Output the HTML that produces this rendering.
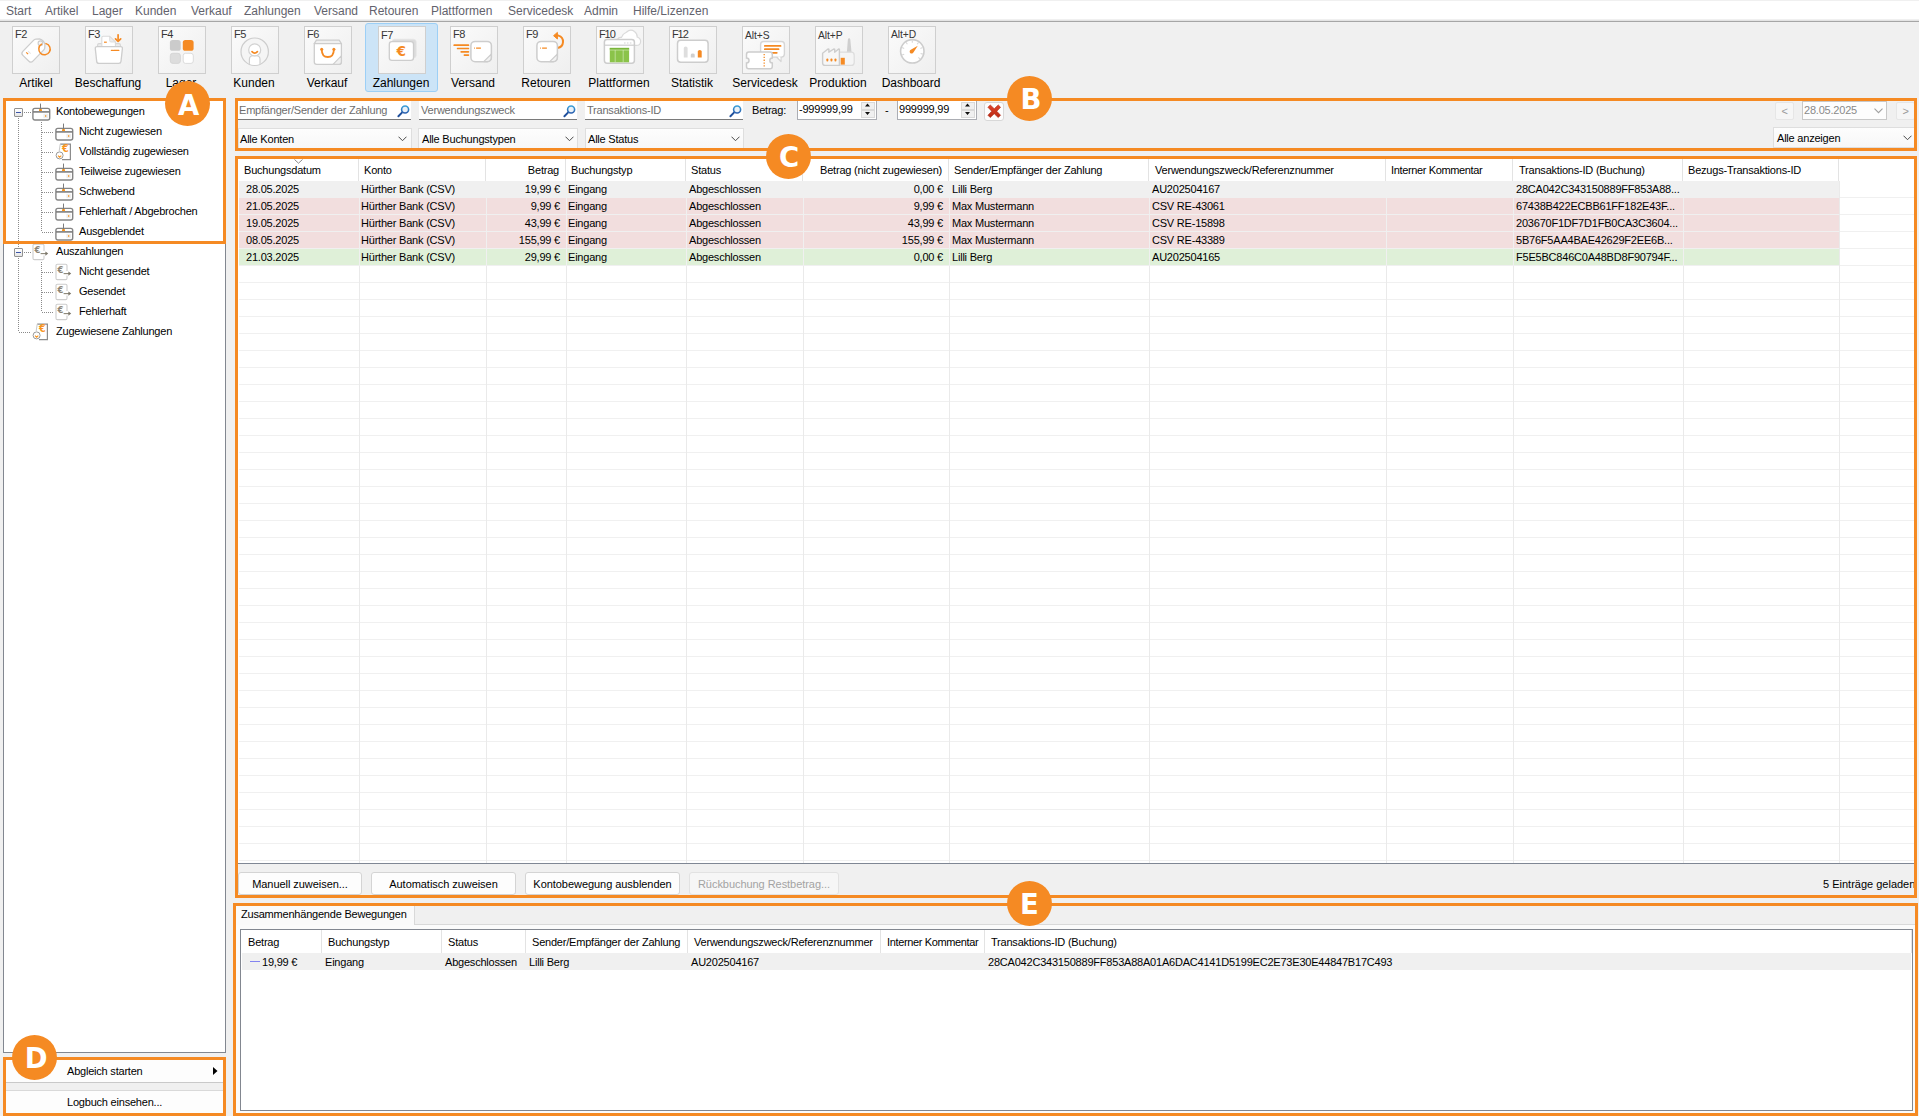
<!DOCTYPE html>
<html lang="de"><head><meta charset="utf-8"><title>Zahlungen</title>
<style>
html,body{margin:0;padding:0}
body{width:1919px;height:1116px;overflow:hidden;background:#f0f0f0;position:relative;font-family:"Liberation Sans",sans-serif;font-size:11px;letter-spacing:-0.21px;color:#000}
div,span{box-sizing:border-box}
.abs,.abs>*{position:absolute}
.t{position:absolute;white-space:pre;line-height:14px;height:14px}
.menu span{position:absolute;top:4px;font-size:12px;letter-spacing:0;color:#62626c;line-height:15px;white-space:pre}
.tb{position:absolute;top:26px;width:48px;height:48px;border:1px solid #cfcfcf;background:linear-gradient(135deg,#fbfbfb,#efefef)}
.tb i{position:absolute;left:2px;top:0px;font-style:normal;font-size:11px;letter-spacing:-0.45px;color:#363636;line-height:14px;white-space:pre}
.tl{position:absolute;top:76px;width:120px;text-align:center;font-size:12px;letter-spacing:0;line-height:15px;color:#000;white-space:pre}
.frame{position:absolute;border:3px solid #f58a23;pointer-events:none}
.circ{position:absolute;width:45px;height:45px;border-radius:50%;background:#f58a23;color:#fff;font-family:"DejaVu Sans","Liberation Sans",sans-serif;font-weight:bold;font-size:27.5px;letter-spacing:0;line-height:45px;text-align:center}
.inp{position:absolute;top:101px;height:19px;background:#fff;border-bottom:1px solid #7a7a7a;color:#6d6d6d}
.inp span{position:absolute;left:1px;top:2px;line-height:14px;white-space:pre}
.cmb{position:absolute;height:21px;background:linear-gradient(#fdfdfd,#f7f7f7);border:1px solid #dedede}
.cmb span{position:absolute;left:2px;top:3px;line-height:14px;white-space:pre}
.btn{position:absolute;top:872px;height:23px;background:#fdfdfd;border:1px solid #d4d4d4;border-radius:3px;text-align:center;line-height:21px;padding-top:1px;letter-spacing:-0.05px;white-space:pre}
.hd{position:absolute;top:0;height:22px;border-right:1px solid #e3e3e3}
.hd span{position:absolute;top:4px;line-height:14px;white-space:pre}
.row{position:absolute;left:0;height:17px}
.row span{position:absolute;top:1px;line-height:14px;white-space:pre}
.vl{position:absolute;width:1px;background:#eaeaea}
.hl{position:absolute;height:1px;background:#f0f0f0}
</style></head><body>
<div class="menu" style="position:absolute;left:0;top:1px;width:1919px;height:18px;background:#fff"></div><div style="position:absolute;left:0;top:20px;width:1919px;height:1px;background:#e4e4e4"></div><div style="position:absolute;left:0;top:21px;width:1919px;height:1px;background:#a6a6a6"></div><div class="menu" style="position:absolute;left:0;top:0;width:1919px;height:20px"><span style="left:6px">Start</span><span style="left:45px">Artikel</span><span style="left:92px">Lager</span><span style="left:135px">Kunden</span><span style="left:191px">Verkauf</span><span style="left:244px">Zahlungen</span><span style="left:314px">Versand</span><span style="left:369px">Retouren</span><span style="left:431px">Plattformen</span><span style="left:508px">Servicedesk</span><span style="left:584px">Admin</span><span style="left:633px">Hilfe/Lizenzen</span></div>
<div style="position:absolute;left:365px;top:23px;width:73px;height:69px;background:#cce4f7;border:1px solid #9ccff6;border-radius:3px"></div><div class="tb" style="left:12px"><i>F2</i><svg style="position:absolute;left:-1px;top:-1px" width="48" height="48" viewBox="0 0 48 48"><g transform="rotate(-46 22.6 23.3)"><path d="M10.1 19.1 Q10.1 16.3 12.9 16.3 H28.6 Q29.8 16.3 30.8 17.1 L33.4 19.4 Q35.6 23.3 33.4 27.2 L30.8 29.5 Q29.8 30.3 28.6 30.3 H12.9 Q10.1 30.3 10.1 27.5 Z" fill="#fff" stroke="#cdcdcd" stroke-width="1.3" stroke-linejoin="round"/><path d="M14.6 19.4 V22" stroke="#f58a23" stroke-width="1.2"/><path d="M16.8 19.8 V23.4" stroke="#e4e4e4" stroke-width="1"/></g><circle cx="28.4" cy="17.2" r="2.3" fill="#f6f6f6" stroke="#cdcdcd" stroke-width="1.1"/><path d="M29.6 18.2 A5.7 5.7 0 1 0 34 17.6" fill="none" stroke="#f58a23" stroke-width="1.5" stroke-linecap="round"/></svg></div><div class="tl" style="left:-24px">Artikel</div><div class="tb" style="left:85px"><i>F3</i><svg style="position:absolute;left:-1px;top:-1px" width="48" height="48" viewBox="0 0 48 48"><path d="M12.6 21 V19 Q12.6 17.6 14 17.6 H34 Q35.4 17.6 35.4 19 V21" fill="#ececec" stroke="#d6d6d6" stroke-width="1.1"/><path d="M16.8 21.5 V11.6 Q16.8 10.2 18.2 10.2 H24.6 L30.4 16 V21.5 Z" fill="#fff" stroke="#dadada" stroke-width="1.1"/><path d="M24.6 10.4 V14.6 Q24.6 16 26 16 H30.2 Z" fill="#ececec" stroke="#dadada" stroke-width="0.8"/><path d="M19 16.2 H21.8" stroke="#f58a23" stroke-width="1.2"/><path d="M10.3 22.6 Q10.1 20.6 12.1 20.6 H35.6 Q37.6 20.6 37.4 22.6 L36 35.4 Q35.8 37.4 33.8 37.4 H13.9 Q11.9 37.4 11.7 35.4 Z" fill="#fff" stroke="#cdcdcd" stroke-width="1.3"/><path d="M26.4 24.4 H27.6 M28.6 24.4 H33.8" stroke="#f58a23" stroke-width="1.3" stroke-linecap="round"/><path d="M33.1 8.8 V13.4" stroke="#f58a23" stroke-width="1.7" stroke-linecap="round"/><path d="M30.5 12.8 L33.1 15.4 L35.7 12.8" fill="none" stroke="#f58a23" stroke-width="1.7" stroke-linecap="round" stroke-linejoin="round"/></svg></div><div class="tl" style="left:48px">Beschaffung</div><div class="tb" style="left:158px"><i>F4</i><svg style="position:absolute;left:-1px;top:-1px" width="48" height="48" viewBox="0 0 48 48"><rect x="11.9" y="14" width="10.8" height="10.8" rx="2.6" fill="#cbcbcb"/><rect x="24.8" y="14" width="10.8" height="10.8" rx="2.6" fill="#f58a23"/><rect x="12.3" y="27.3" width="10.1" height="10.1" rx="2.4" fill="#dddddd" stroke="#d2d2d2" stroke-width="0.8"/><rect x="25.2" y="27.3" width="10.1" height="10.1" rx="2.4" fill="#fff" stroke="#d8d8d8" stroke-width="0.9"/></svg></div><div class="tl" style="left:121px">Lager</div><div class="tb" style="left:231px"><i>F5</i><svg style="position:absolute;left:-1px;top:-1px" width="48" height="48" viewBox="0 0 48 48"><clipPath id="kc"><circle cx="23.7" cy="25.7" r="13.3"/></clipPath><circle cx="23.7" cy="25.7" r="13.7" fill="#f5f5f5" stroke="#cdcdcd" stroke-width="1.2"/><g clip-path="url(#kc)"><rect x="18.4" y="29.6" width="10.6" height="14" rx="3.6" fill="#fff" stroke="#d0d0d0" stroke-width="1.2"/></g><circle cx="23.7" cy="23.9" r="6" fill="#fff" stroke="#d2d2d2" stroke-width="1.2"/><path d="M21 25.6 Q23.7 28.6 26.4 25.6" fill="none" stroke="#f58a23" stroke-width="1.7" stroke-linecap="round"/></svg></div><div class="tl" style="left:194px">Kunden</div><div class="tb" style="left:304px"><i>F6</i><svg style="position:absolute;left:-1px;top:-1px" width="48" height="48" viewBox="0 0 48 48"><path d="M10.3 17.6 L12.4 14.1 H35.2 L37.4 17.6 Z" fill="#f0f0f0" stroke="#cdcdcd" stroke-width="1.2" stroke-linejoin="round"/><path d="M10.3 17.6 H37.4 V36 Q37.4 38.4 35 38.4 H12.7 Q10.3 38.4 10.3 36 Z" fill="#fff" stroke="#cdcdcd" stroke-width="1.3"/><path d="M29 38.3 L37.3 29.8 V36 Q37.3 38.3 35 38.3 Z" fill="#f0f0f0" stroke="#cdcdcd" stroke-width="1.1" stroke-linejoin="round"/><path d="M17.7 23.4 Q17.9 31 23.8 31 Q29.7 31 29.9 23.4" fill="none" stroke="#f58a23" stroke-width="1.8"/><circle cx="17.7" cy="23.2" r="1.5" fill="#f58a23"/><circle cx="29.9" cy="23.2" r="1.5" fill="#f58a23"/></svg></div><div class="tl" style="left:267px">Verkauf</div><div class="tb" style="left:378px"><i style="top:1px">F7</i><svg style="position:absolute;left:-1px;top:-1px" width="48" height="48" viewBox="0 0 48 48"><rect x="14" y="13.2" width="24.2" height="18.8" rx="2.8" fill="#dcdcdc" stroke="#e6e6e6" stroke-width="0.8"/><rect x="11.3" y="15.6" width="24.2" height="18.8" rx="2.6" fill="#fff" stroke="#cdcdcd" stroke-width="1.3"/><text x="23.2" y="30.2" text-anchor="middle" font-family="DejaVu Sans, Liberation Sans, sans-serif" font-weight="bold" font-size="13.6" fill="#f58a23">€</text></svg></div><div class="tl" style="left:341px">Zahlungen</div><div class="tb" style="left:450px"><i>F8</i><svg style="position:absolute;left:-1px;top:-1px" width="48" height="48" viewBox="0 0 48 48"><rect x="20.9" y="15.4" width="20.5" height="20.4" rx="4.2" fill="#fff" stroke="#cdcdcd" stroke-width="1.5"/><path d="M33.7 35.6 L41.2 28.2 V31.6 Q41.2 35.6 37.2 35.6 Z" fill="#f2f2f2" stroke="#cdcdcd" stroke-width="1.2" stroke-linejoin="round"/><path d="M24.0 22.1 H24.799999999999997 M26.099999999999998 22.1 H30.9" stroke="#f58a23" stroke-width="1.3"/><path d="M4.2 19.2 H18.4 M7.6 22.5 H18.4 M11.2 25.8 H18.4 M14.4 29.1 H18.4" stroke="#f58a23" stroke-width="1.7" stroke-linecap="round"/></svg></div><div class="tl" style="left:413px">Versand</div><div class="tb" style="left:523px"><i>F9</i><svg style="position:absolute;left:-1px;top:-1px" width="48" height="48" viewBox="0 0 48 48"><path d="M34.6 21.9 A6.3 6.3 0 0 0 35.4 9.6 L33 9.6" fill="none" stroke="#f58a23" stroke-width="2"/><path d="M34.4 6.4 L30.6 9.7 L34.4 13 Z" fill="#f58a23" stroke="#f58a23" stroke-width="1" stroke-linejoin="round"/><rect x="13.9" y="15.4" width="20.5" height="20.4" rx="4.2" fill="#fff" stroke="#cdcdcd" stroke-width="1.5"/><path d="M26.700000000000003 35.6 L34.2 28.2 V31.6 Q34.2 35.6 30.200000000000003 35.6 Z" fill="#f2f2f2" stroke="#cdcdcd" stroke-width="1.2" stroke-linejoin="round"/><path d="M17.0 22.1 H17.8 M19.1 22.1 H23.9" stroke="#f58a23" stroke-width="1.3"/></svg></div><div class="tl" style="left:486px">Retouren</div><div class="tb" style="left:596px"><i style="letter-spacing:-1.1px">F10</i><svg style="position:absolute;left:-1px;top:-1px" width="48" height="48" viewBox="0 0 48 48"><path d="M22.4 19.4 Q19.6 17 21.4 13.4 Q22.4 11.2 25.4 11.4 Q27 7.6 30.4 6.2 Q34.4 2.6 38.4 5.4 Q41.4 7.4 41.2 11 Q45 12.4 44.6 16 Q44.2 19.4 40.4 19.4 Z" fill="#fff" stroke="#dadada" stroke-width="1.2"/><rect x="8.4" y="13.4" width="30" height="23.8" rx="2.6" fill="#fff" stroke="#cdcdcd" stroke-width="1.5"/><path d="M8.4 19.2 H38.4" stroke="#cdcdcd" stroke-width="1.2"/><path d="M28 16.9 H29.6 M30.9 16.9 H32.5 M33.8 16.9 H35.4" stroke="#e2e2e2" stroke-width="1.5"/><rect x="13.8" y="21.9" width="19.3" height="14.4" fill="#8bc34a"/><rect x="13.8" y="21.9" width="19.3" height="1.8" fill="#79b63a"/><path d="M13.8 24 H33.1 M19.2 24 V36.3 M27.2 24 V36.3" stroke="#dff0c8" stroke-width="0.6"/></svg></div><div class="tl" style="left:559px">Plattformen</div><div class="tb" style="left:669px"><i style="letter-spacing:-1.1px">F12</i><svg style="position:absolute;left:-1px;top:-1px" width="48" height="48" viewBox="0 0 48 48"><rect x="8.5" y="14.3" width="30.6" height="22" rx="3.2" fill="#fff" stroke="#cdcdcd" stroke-width="1.5"/><path d="M14.8 31.6 V22 Q14.8 20.5 16.7 20.5 Q18.6 20.5 18.6 22 V31.6 Z" fill="#dedede"/><path d="M21.8 31.6 V28.8 Q21.8 27.5 23.75 27.5 Q25.7 27.5 25.7 28.8 V31.6 Z" fill="#cfcfcf"/><path d="M28.8 31.6 V25.6 Q28.8 23.9 30.75 23.9 Q32.7 23.9 32.7 25.6 V31.6 Z" fill="#f58a23"/></svg></div><div class="tl" style="left:632px">Statistik</div><div class="tb" style="left:742px"><i style="top:2px;font-size:10.3px;letter-spacing:-0.1px">Alt+S</i><svg style="position:absolute;left:-1px;top:-1px" width="48" height="48" viewBox="0 0 48 48"><path d="M34.6 31 L39 35.6 V31" fill="#fff" stroke="#d6d6d6" stroke-width="1.3" stroke-linejoin="round"/><rect x="18.6" y="15.5" width="23.8" height="15.6" rx="3" fill="#fff" stroke="#d6d6d6" stroke-width="1.4"/><path d="M35.4 30.4 L38.3 33.6 V30.4 Z" fill="#fff"/><path d="M22.8 19.9 H38.6 M22.8 23.2 H36.6 M30 26.8 H34.8" stroke="#f58a23" stroke-width="1.7" stroke-linecap="round"/><path d="M6.8 26.1 H28 Q30.3 26.1 30.3 28.4 V32 A2.5 2.5 0 0 0 30.3 37 V40.5 Q30.3 42.8 28 42.8 H6.8 Q4.5 42.8 4.5 40.5 V37 A2.5 2.5 0 0 0 4.5 32 V28.4 Q4.5 26.1 6.8 26.1 Z" fill="#fff" stroke="#cdcdcd" stroke-width="1.5"/><path d="M22.2 28 V41.4" stroke="#f58a23" stroke-width="1.3" stroke-dasharray="1.3 1.5"/></svg></div><div class="tl" style="left:705px">Servicedesk</div><div class="tb" style="left:815px"><i style="top:2px;font-size:10.3px;letter-spacing:-0.1px">Alt+P</i><svg style="position:absolute;left:-1px;top:-1px" width="48" height="48" viewBox="0 0 48 48"><path d="M31.8 27 L32.9 13.4 Q33 12.2 34.1 12.2 Q35.2 12.2 35.3 13.4 L36.6 27 Z" fill="#cfcfcf"/><rect x="22" y="26.2" width="17.2" height="13.2" rx="3" fill="#f5f5f5" stroke="#dddddd" stroke-width="1.2"/><path d="M7.6 27.2 L13 23 L13.9 23.2 V26.2 L18.8 23 L19.7 23.2 V26.2 L23.6 23 L24.4 23.2 V39.4 H10 Q7.6 39.4 7.6 37 Z" fill="#f7f7f7" stroke="#cdcdcd" stroke-width="1.4" stroke-linejoin="round"/><rect x="11.4" y="32.4" width="1.9" height="3.2" rx="0.8" fill="#f58a23"/><rect x="15.5" y="32.4" width="1.9" height="3.2" rx="0.8" fill="#f58a23"/><rect x="19.5" y="32.4" width="1.9" height="3.2" rx="0.8" fill="#f58a23"/><rect x="25.7" y="31.8" width="4.1" height="6.8" fill="#f58a23"/></svg></div><div class="tl" style="left:778px">Produktion</div><div class="tb" style="left:888px"><i style="top:1px;font-size:10.3px;letter-spacing:-0.1px">Alt+D</i><svg style="position:absolute;left:-1px;top:-1px" width="48" height="48" viewBox="0 0 48 48"><circle cx="24.3" cy="25.3" r="11.7" fill="#fff" stroke="#cdcdcd" stroke-width="1.6"/><path d="M16.2 28.2 L14.0 29.1 M16.2 22.4 L14.0 21.5 M19.4 18.3 L18.0 16.3 M24.3 16.7 L24.3 14.3 M29.2 18.3 L30.6 16.3 M32.4 22.4 L34.6 21.5 M32.6 27.5 L34.9 28.1 M30.4 31.4 L32.1 33.1 " stroke="#d8d8d8" stroke-width="1.1"/><path d="M29.8 19.8 L25.4 26.6 A2 2 0 1 1 22.8 23.8 Z" fill="#f58a23"/></svg></div><div class="tl" style="left:851px">Dashboard</div>
<div style="position:absolute;left:3px;top:100px;width:223px;height:953px;background:#fff;border:1px solid #828790"></div><div style="position:absolute;left:18px;top:118px;width:1px;height:214px;background:repeating-linear-gradient(to bottom,#8a8a8a 0 1px,transparent 1px 2px)"></div>
<div style="position:absolute;left:41px;top:122px;width:1px;height:110px;background:repeating-linear-gradient(to bottom,#8a8a8a 0 1px,transparent 1px 2px)"></div>
<div style="position:absolute;left:41px;top:262px;width:1px;height:50px;background:repeating-linear-gradient(to bottom,#8a8a8a 0 1px,transparent 1px 2px)"></div>
<div style="position:absolute;left:24px;top:112px;width:7px;height:1px;background:repeating-linear-gradient(to right,#8a8a8a 0 1px,transparent 1px 2px)"></div>
<div style="position:absolute;left:24px;top:252px;width:7px;height:1px;background:repeating-linear-gradient(to right,#8a8a8a 0 1px,transparent 1px 2px)"></div>
<div style="position:absolute;left:19px;top:332px;width:12px;height:1px;background:repeating-linear-gradient(to right,#8a8a8a 0 1px,transparent 1px 2px)"></div>
<div style="position:absolute;left:42px;top:132px;width:12px;height:1px;background:repeating-linear-gradient(to right,#8a8a8a 0 1px,transparent 1px 2px)"></div>
<div style="position:absolute;left:42px;top:152px;width:12px;height:1px;background:repeating-linear-gradient(to right,#8a8a8a 0 1px,transparent 1px 2px)"></div>
<div style="position:absolute;left:42px;top:172px;width:12px;height:1px;background:repeating-linear-gradient(to right,#8a8a8a 0 1px,transparent 1px 2px)"></div>
<div style="position:absolute;left:42px;top:192px;width:12px;height:1px;background:repeating-linear-gradient(to right,#8a8a8a 0 1px,transparent 1px 2px)"></div>
<div style="position:absolute;left:42px;top:212px;width:12px;height:1px;background:repeating-linear-gradient(to right,#8a8a8a 0 1px,transparent 1px 2px)"></div>
<div style="position:absolute;left:42px;top:232px;width:12px;height:1px;background:repeating-linear-gradient(to right,#8a8a8a 0 1px,transparent 1px 2px)"></div>
<div style="position:absolute;left:42px;top:272px;width:12px;height:1px;background:repeating-linear-gradient(to right,#8a8a8a 0 1px,transparent 1px 2px)"></div>
<div style="position:absolute;left:42px;top:292px;width:12px;height:1px;background:repeating-linear-gradient(to right,#8a8a8a 0 1px,transparent 1px 2px)"></div>
<div style="position:absolute;left:42px;top:312px;width:12px;height:1px;background:repeating-linear-gradient(to right,#8a8a8a 0 1px,transparent 1px 2px)"></div>
<div style="position:absolute;left:14px;top:108px;width:9px;height:9px;border:1px solid #919191;border-radius:1px;background:linear-gradient(#fff,#e4e4e4)"><i style="position:absolute;left:1px;top:3px;width:5px;height:1px;background:#3c55a8"></i></div>
<div style="position:absolute;left:14px;top:248px;width:9px;height:9px;border:1px solid #919191;border-radius:1px;background:linear-gradient(#fff,#e4e4e4)"><i style="position:absolute;left:1px;top:3px;width:5px;height:1px;background:#3c55a8"></i></div>
<svg style="position:absolute;left:32px;top:103px" width="19" height="18" viewBox="0 0 19 18"><rect x="0.9" y="5.4" width="16.8" height="11.6" rx="2" fill="#fff" stroke="#858585" stroke-width="1.4"/><path d="M8.5 0.6 V7.6" stroke="#7d7d7d" stroke-width="1"/><path d="M1 8.9 H17.6" stroke="#7d7d7d" stroke-width="1.6"/><rect x="7" y="6.2" width="3" height="1.8" fill="#f7941d"/><rect x="11.4" y="10.8" width="4.8" height="4.4" fill="#ededed"/><path d="M13 11.9 L14.9 13 L13 14.1 Z" fill="#f7941d"/></svg>
<div class="t" style="left:56px;top:104px">Kontobewegungen</div>
<svg style="position:absolute;left:55px;top:123px" width="19" height="18" viewBox="0 0 19 18"><rect x="0.9" y="5.4" width="16.8" height="11.6" rx="2" fill="#fff" stroke="#858585" stroke-width="1.4"/><path d="M8.5 0.6 V7.6" stroke="#7d7d7d" stroke-width="1"/><path d="M1 8.9 H17.6" stroke="#7d7d7d" stroke-width="1.6"/><rect x="7" y="6.2" width="3" height="1.8" fill="#f7941d"/><rect x="11.4" y="10.8" width="4.8" height="4.4" fill="#ededed"/><path d="M13 11.9 L14.9 13 L13 14.1 Z" fill="#f7941d"/></svg>
<div class="t" style="left:79px;top:124px">Nicht zugewiesen</div>
<svg style="position:absolute;left:55px;top:143px" width="18" height="18" viewBox="0 0 18 18"><path d="M5.2 1.2 H15.4 V16.6 H7" fill="#fff" stroke="#8c8c8c" stroke-width="1.2"/><path d="M5.2 1.2 L4.2 8" stroke="#c9c9c9" stroke-width="1" fill="none"/><circle cx="4.6" cy="12.4" r="3.5" fill="#fff" stroke="#9a9a9a" stroke-width="1"/><path d="M3 12.6 L4.6 14.2 L6.3 12.6" fill="none" stroke="#f7941d" stroke-width="1.1"/><text x="6.9" y="9.4" font-family="DejaVu Sans, Liberation Sans, sans-serif" font-weight="bold" font-size="9.6" fill="#f7941d">€</text></svg>
<div class="t" style="left:79px;top:144px">Vollständig zugewiesen</div>
<svg style="position:absolute;left:55px;top:163px" width="19" height="18" viewBox="0 0 19 18"><rect x="0.9" y="5.4" width="16.8" height="11.6" rx="2" fill="#fff" stroke="#858585" stroke-width="1.4"/><path d="M8.5 0.6 V7.6" stroke="#7d7d7d" stroke-width="1"/><path d="M1 8.9 H17.6" stroke="#7d7d7d" stroke-width="1.6"/><rect x="7" y="6.2" width="3" height="1.8" fill="#f7941d"/><rect x="11.4" y="10.8" width="4.8" height="4.4" fill="#ededed"/><path d="M13 11.9 L14.9 13 L13 14.1 Z" fill="#f7941d"/></svg>
<div class="t" style="left:79px;top:164px">Teilweise zugewiesen</div>
<svg style="position:absolute;left:55px;top:183px" width="19" height="18" viewBox="0 0 19 18"><rect x="0.9" y="5.4" width="16.8" height="11.6" rx="2" fill="#fff" stroke="#858585" stroke-width="1.4"/><path d="M8.5 0.6 V7.6" stroke="#7d7d7d" stroke-width="1"/><path d="M1 8.9 H17.6" stroke="#7d7d7d" stroke-width="1.6"/><rect x="7" y="6.2" width="3" height="1.8" fill="#f7941d"/><rect x="11.4" y="10.8" width="4.8" height="4.4" fill="#ededed"/><path d="M13 11.9 L14.9 13 L13 14.1 Z" fill="#f7941d"/></svg>
<div class="t" style="left:79px;top:184px">Schwebend</div>
<svg style="position:absolute;left:55px;top:203px" width="19" height="18" viewBox="0 0 19 18"><rect x="0.9" y="5.4" width="16.8" height="11.6" rx="2" fill="#fff" stroke="#858585" stroke-width="1.4"/><path d="M8.5 0.6 V7.6" stroke="#7d7d7d" stroke-width="1"/><path d="M1 8.9 H17.6" stroke="#7d7d7d" stroke-width="1.6"/><rect x="7" y="6.2" width="3" height="1.8" fill="#f7941d"/><rect x="11.4" y="10.8" width="4.8" height="4.4" fill="#ededed"/><path d="M13 11.9 L14.9 13 L13 14.1 Z" fill="#f7941d"/></svg>
<div class="t" style="left:79px;top:204px">Fehlerhaft / Abgebrochen</div>
<svg style="position:absolute;left:55px;top:223px" width="19" height="18" viewBox="0 0 19 18"><rect x="0.9" y="5.4" width="16.8" height="11.6" rx="2" fill="#fff" stroke="#858585" stroke-width="1.4"/><path d="M8.5 0.6 V7.6" stroke="#7d7d7d" stroke-width="1"/><path d="M1 8.9 H17.6" stroke="#7d7d7d" stroke-width="1.6"/><rect x="7" y="6.2" width="3" height="1.8" fill="#f7941d"/><rect x="11.4" y="10.8" width="4.8" height="4.4" fill="#ededed"/><path d="M13 11.9 L14.9 13 L13 14.1 Z" fill="#f7941d"/></svg>
<div class="t" style="left:79px;top:224px">Ausgeblendet</div>
<svg style="position:absolute;left:32px;top:243px" width="18" height="18" viewBox="0 0 18 18"><path d="M12 12.5 V15.2 Q12 16.6 10.6 16.6 H2.4 Q1 16.6 1 15.2 V2.6 Q1 1.2 2.4 1.2 H10.6 Q12 1.2 12 2.6 V8" fill="#fff" stroke="#cdcdcd" stroke-width="1.1"/><text x="2.6" y="9.6" font-family="DejaVu Sans, Liberation Sans, sans-serif" font-weight="bold" font-size="8.6" fill="#8c8577">€</text><path d="M8.6 10.6 H14" stroke="#8a8577" stroke-width="1.1"/><path d="M13.4 8.4 L16.2 10.6 L13.4 12.8 Z" fill="#7b766a"/></svg>
<div class="t" style="left:56px;top:244px">Auszahlungen</div>
<svg style="position:absolute;left:55px;top:263px" width="18" height="18" viewBox="0 0 18 18"><path d="M12 12.5 V15.2 Q12 16.6 10.6 16.6 H2.4 Q1 16.6 1 15.2 V2.6 Q1 1.2 2.4 1.2 H10.6 Q12 1.2 12 2.6 V8" fill="#fff" stroke="#cdcdcd" stroke-width="1.1"/><text x="2.6" y="9.6" font-family="DejaVu Sans, Liberation Sans, sans-serif" font-weight="bold" font-size="8.6" fill="#8c8577">€</text><path d="M8.6 10.6 H14" stroke="#8a8577" stroke-width="1.1"/><path d="M13.4 8.4 L16.2 10.6 L13.4 12.8 Z" fill="#7b766a"/></svg>
<div class="t" style="left:79px;top:264px">Nicht gesendet</div>
<svg style="position:absolute;left:55px;top:283px" width="18" height="18" viewBox="0 0 18 18"><path d="M12 12.5 V15.2 Q12 16.6 10.6 16.6 H2.4 Q1 16.6 1 15.2 V2.6 Q1 1.2 2.4 1.2 H10.6 Q12 1.2 12 2.6 V8" fill="#fff" stroke="#cdcdcd" stroke-width="1.1"/><text x="2.6" y="9.6" font-family="DejaVu Sans, Liberation Sans, sans-serif" font-weight="bold" font-size="8.6" fill="#8c8577">€</text><path d="M8.6 10.6 H14" stroke="#8a8577" stroke-width="1.1"/><path d="M13.4 8.4 L16.2 10.6 L13.4 12.8 Z" fill="#7b766a"/></svg>
<div class="t" style="left:79px;top:284px">Gesendet</div>
<svg style="position:absolute;left:55px;top:303px" width="18" height="18" viewBox="0 0 18 18"><path d="M12 12.5 V15.2 Q12 16.6 10.6 16.6 H2.4 Q1 16.6 1 15.2 V2.6 Q1 1.2 2.4 1.2 H10.6 Q12 1.2 12 2.6 V8" fill="#fff" stroke="#cdcdcd" stroke-width="1.1"/><text x="2.6" y="9.6" font-family="DejaVu Sans, Liberation Sans, sans-serif" font-weight="bold" font-size="8.6" fill="#8c8577">€</text><path d="M8.6 10.6 H14" stroke="#8a8577" stroke-width="1.1"/><path d="M13.4 8.4 L16.2 10.6 L13.4 12.8 Z" fill="#7b766a"/></svg>
<div class="t" style="left:79px;top:304px">Fehlerhaft</div>
<svg style="position:absolute;left:32px;top:323px" width="18" height="18" viewBox="0 0 18 18"><path d="M5.2 1.2 H15.4 V16.6 H7" fill="#fff" stroke="#8c8c8c" stroke-width="1.2"/><path d="M5.2 1.2 L4.2 8" stroke="#c9c9c9" stroke-width="1" fill="none"/><circle cx="4.6" cy="12.4" r="3.5" fill="#fff" stroke="#9a9a9a" stroke-width="1"/><path d="M3 12.6 L4.6 14.2 L6.3 12.6" fill="none" stroke="#f7941d" stroke-width="1.1"/><text x="6.9" y="9.4" font-family="DejaVu Sans, Liberation Sans, sans-serif" font-weight="bold" font-size="9.6" fill="#f7941d">€</text></svg>
<div class="t" style="left:56px;top:324px">Zugewiesene Zahlungen</div><div class="inp" style="left:238px;width:173px"><span style="left:1px">Empfänger/Sender der Zahlung</span><svg style="position:absolute;right:0px;top:2px" width="16" height="16" viewBox="0 0 16 16"><defs><linearGradient id="mg1" x1="0" y1="0" x2="0" y2="1"><stop offset="0" stop-color="#3aa0d8"/><stop offset="1" stop-color="#2a5fae"/></linearGradient></defs><path d="M7.2 9.4 L3.4 13.2" stroke="#1f4f9c" stroke-width="2" stroke-linecap="round"/><circle cx="10.1" cy="6.5" r="3.5" fill="#eaf1f8" stroke="url(#mg1)" stroke-width="1.6"/></svg></div><div class="inp" style="left:419px;width:158px"><span style="left:2px">Verwendungszweck</span><svg style="position:absolute;right:0px;top:2px" width="16" height="16" viewBox="0 0 16 16"><defs><linearGradient id="mg2" x1="0" y1="0" x2="0" y2="1"><stop offset="0" stop-color="#3aa0d8"/><stop offset="1" stop-color="#2a5fae"/></linearGradient></defs><path d="M7.2 9.4 L3.4 13.2" stroke="#1f4f9c" stroke-width="2" stroke-linecap="round"/><circle cx="10.1" cy="6.5" r="3.5" fill="#eaf1f8" stroke="url(#mg2)" stroke-width="1.6"/></svg></div><div class="inp" style="left:585px;width:158px"><span style="left:2px">Transaktions-ID</span><svg style="position:absolute;right:0px;top:2px" width="16" height="16" viewBox="0 0 16 16"><defs><linearGradient id="mg3" x1="0" y1="0" x2="0" y2="1"><stop offset="0" stop-color="#3aa0d8"/><stop offset="1" stop-color="#2a5fae"/></linearGradient></defs><path d="M7.2 9.4 L3.4 13.2" stroke="#1f4f9c" stroke-width="2" stroke-linecap="round"/><circle cx="10.1" cy="6.5" r="3.5" fill="#eaf1f8" stroke="url(#mg3)" stroke-width="1.6"/></svg></div><div class="cmb" style="left:238px;top:128px;width:174px;color:#000"><span style="left:1px">Alle Konten</span><svg style="position:absolute;right:4px;top:7px" width="9" height="6" viewBox="0 0 9 6"><path d="M0.5 0.7 L4.5 4.7 L8.5 0.7" fill="none" stroke="#4a4a4a" stroke-width="1"/></svg></div><div class="cmb" style="left:418px;top:128px;width:160px;color:#000"><span style="left:3px">Alle Buchungstypen</span><svg style="position:absolute;right:3px;top:7px" width="9" height="6" viewBox="0 0 9 6"><path d="M0.5 0.7 L4.5 4.7 L8.5 0.7" fill="none" stroke="#4a4a4a" stroke-width="1"/></svg></div><div class="cmb" style="left:585px;top:128px;width:159px;color:#000"><span style="left:2px">Alle Status</span><svg style="position:absolute;right:3px;top:7px" width="9" height="6" viewBox="0 0 9 6"><path d="M0.5 0.7 L4.5 4.7 L8.5 0.7" fill="none" stroke="#4a4a4a" stroke-width="1"/></svg></div><div class="cmb" style="left:1773px;top:127px;width:143px;color:#000"><span style="left:3px">Alle anzeigen</span><svg style="position:absolute;right:3px;top:7px" width="9" height="6" viewBox="0 0 9 6"><path d="M0.5 0.7 L4.5 4.7 L8.5 0.7" fill="none" stroke="#4a4a4a" stroke-width="1"/></svg></div><div class="t" style="left:752px;top:103px">Betrag:</div><div style="position:absolute;left:797px;top:100px;width:80px;height:20px;background:#fff;border:1px solid #abadb3"><span class="t" style="left:1px;top:1px">-999999,99</span><div style="position:absolute;right:1px;top:1px;width:14px;height:8px;background:#f0f0f0;border:1px solid #dadada"></div><div style="position:absolute;right:1px;top:9px;width:14px;height:8px;background:#f0f0f0;border:1px solid #dadada"></div><svg style="position:absolute;right:6px;top:2px" width="5" height="13" viewBox="0 0 5 13"><path d="M0 3.6 L2.5 0.6 L5 3.6 Z M0 9 L2.5 12 L5 9 Z" fill="#111"/></svg></div><div class="t" style="left:885px;top:103px">-</div><div style="position:absolute;left:897px;top:100px;width:80px;height:20px;background:#fff;border:1px solid #abadb3"><span class="t" style="left:1px;top:1px">999999,99</span><div style="position:absolute;right:1px;top:1px;width:14px;height:8px;background:#f0f0f0;border:1px solid #dadada"></div><div style="position:absolute;right:1px;top:9px;width:14px;height:8px;background:#f0f0f0;border:1px solid #dadada"></div><svg style="position:absolute;right:6px;top:2px" width="5" height="13" viewBox="0 0 5 13"><path d="M0 3.6 L2.5 0.6 L5 3.6 Z M0 9 L2.5 12 L5 9 Z" fill="#111"/></svg></div><div style="position:absolute;left:984px;top:102px;width:20px;height:19px;background:#fdfdfd;border:1px solid #d8d8d8;border-radius:3px"><svg style="position:absolute;left:2px;top:1px" width="14.5" height="14.5" viewBox="0 0 16 16"><defs><linearGradient id="rx" x1="0" y1="0" x2="0" y2="1"><stop offset="0" stop-color="#e0442a"/><stop offset="1" stop-color="#b92a14"/></linearGradient></defs><path d="M3.6 1 L8 5.2 L12.4 1 L15 3.6 L10.8 8 L15 12.4 L12.4 15 L8 10.8 L3.6 15 L1 12.4 L5.2 8 L1 3.6 Z" fill="url(#rx)" stroke="#a8220f" stroke-width="0.6" stroke-linejoin="round"/></svg></div><div style="position:absolute;left:1775px;top:102px;width:19px;height:18px;background:#f6f6f6;border:1px solid #e6e6e6;border-radius:2px;color:#9a9a9a;text-align:center;line-height:16px">&lt;</div><div style="position:absolute;left:1802px;top:101px;width:85px;height:19px;background:#fdfdfd;border:1px solid #c8c8c8;color:#8a8a8a"><span class="t" style="left:1px;top:1px">28.05.2025</span><svg style="position:absolute;right:3px;top:6px" width="9" height="6" viewBox="0 0 9 6"><path d="M0.5 0.7 L4.5 4.7 L8.5 0.7" fill="none" stroke="#a0a0a0" stroke-width="1.1"/></svg></div><div style="position:absolute;left:1896px;top:102px;width:19px;height:18px;background:#f6f6f6;border:1px solid #e6e6e6;border-radius:2px;color:#9a9a9a;text-align:center;line-height:16px">&gt;</div>
<div style="position:absolute;left:238px;top:159px;width:1676px;height:704px;background:#fff;overflow:hidden"><div class="hl" style="left:1px;top:38px;width:1675px"></div><div class="hl" style="left:1px;top:55px;width:1675px"></div><div class="hl" style="left:1px;top:72px;width:1675px"></div><div class="hl" style="left:1px;top:89px;width:1675px"></div><div class="hl" style="left:1px;top:106px;width:1675px"></div><div class="hl" style="left:1px;top:123px;width:1675px"></div><div class="hl" style="left:1px;top:140px;width:1675px"></div><div class="hl" style="left:1px;top:157px;width:1675px"></div><div class="hl" style="left:1px;top:174px;width:1675px"></div><div class="hl" style="left:1px;top:191px;width:1675px"></div><div class="hl" style="left:1px;top:208px;width:1675px"></div><div class="hl" style="left:1px;top:225px;width:1675px"></div><div class="hl" style="left:1px;top:242px;width:1675px"></div><div class="hl" style="left:1px;top:259px;width:1675px"></div><div class="hl" style="left:1px;top:276px;width:1675px"></div><div class="hl" style="left:1px;top:293px;width:1675px"></div><div class="hl" style="left:1px;top:310px;width:1675px"></div><div class="hl" style="left:1px;top:327px;width:1675px"></div><div class="hl" style="left:1px;top:344px;width:1675px"></div><div class="hl" style="left:1px;top:361px;width:1675px"></div><div class="hl" style="left:1px;top:378px;width:1675px"></div><div class="hl" style="left:1px;top:395px;width:1675px"></div><div class="hl" style="left:1px;top:412px;width:1675px"></div><div class="hl" style="left:1px;top:429px;width:1675px"></div><div class="hl" style="left:1px;top:446px;width:1675px"></div><div class="hl" style="left:1px;top:463px;width:1675px"></div><div class="hl" style="left:1px;top:480px;width:1675px"></div><div class="hl" style="left:1px;top:497px;width:1675px"></div><div class="hl" style="left:1px;top:514px;width:1675px"></div><div class="hl" style="left:1px;top:531px;width:1675px"></div><div class="hl" style="left:1px;top:548px;width:1675px"></div><div class="hl" style="left:1px;top:565px;width:1675px"></div><div class="hl" style="left:1px;top:582px;width:1675px"></div><div class="hl" style="left:1px;top:599px;width:1675px"></div><div class="hl" style="left:1px;top:616px;width:1675px"></div><div class="hl" style="left:1px;top:633px;width:1675px"></div><div class="hl" style="left:1px;top:650px;width:1675px"></div><div class="hl" style="left:1px;top:667px;width:1675px"></div><div class="hl" style="left:1px;top:684px;width:1675px"></div><div class="hl" style="left:1px;top:701px;width:1675px"></div><div class="hl" style="left:1px;top:718px;width:1675px"></div><div class="vl" style="left:121px;top:22px;height:690px"></div><div class="vl" style="left:248px;top:22px;height:690px"></div><div class="vl" style="left:328px;top:22px;height:690px"></div><div class="vl" style="left:448px;top:22px;height:690px"></div><div class="vl" style="left:565px;top:22px;height:690px"></div><div class="vl" style="left:711px;top:22px;height:690px"></div><div class="vl" style="left:911px;top:22px;height:690px"></div><div class="vl" style="left:1148px;top:22px;height:690px"></div><div class="vl" style="left:1275px;top:22px;height:690px"></div><div class="vl" style="left:1445px;top:22px;height:690px"></div><div class="vl" style="left:1601px;top:22px;height:690px"></div><div class="hd" style="left:0px;width:121px"><span style="left:6px">Buchungsdatum</span></div><div class="hd" style="left:120px;width:128px"><span style="left:6px">Konto</span></div><div class="hd" style="left:247px;width:81px"><span style="right:6px">Betrag</span></div><div class="hd" style="left:327px;width:121px"><span style="left:6px">Buchungstyp</span></div><div class="hd" style="left:447px;width:118px"><span style="left:6px">Status</span></div><div class="hd" style="left:564px;width:147px"><span style="right:6px">Betrag (nicht zugewiesen)</span></div><div class="hd" style="left:710px;width:201px"><span style="left:6px">Sender/Empfänger der Zahlung</span></div><div class="hd" style="left:910px;width:238px"><span style="left:7px">Verwendungszweck/Referenznummer</span></div><div class="hd" style="left:1147px;width:128px"><span style="left:6px;letter-spacing:-0.36px">Interner Kommentar</span></div><div class="hd" style="left:1274px;width:171px"><span style="left:7px">Transaktions-ID (Buchung)</span></div><div class="hd" style="left:1444px;width:157px"><span style="left:6px">Bezugs-Transaktions-ID</span></div><svg style="position:absolute;left:56px;top:0px" width="9" height="5" viewBox="0 0 9 5"><path d="M0.5 0.5 L4.5 4.2 L8.5 0.5" fill="none" stroke="#8a8a8a" stroke-width="1"/></svg><div class="row" style="top:22px;left:1px;width:1600px;background:#f0f0f0;border-bottom:1px solid #f0f0f0"><span style="left:7px">28.05.2025</span><span style="left:122px">Hürther Bank (CSV)</span><span style="right:1279px">19,99 €</span><span style="left:329px">Eingang</span><span style="left:450px">Abgeschlossen</span><span style="right:896px">0,00 €</span><span style="left:713px">Lilli Berg</span><span style="left:913px">AU202504167</span><span style="left:1277px">28CA042C343150889FF853A88...</span><i style="position:absolute;left:120px;top:0;width:1px;height:17px;background:#f0f0f0"></i><i style="position:absolute;left:247px;top:0;width:1px;height:17px;background:#f0f0f0"></i><i style="position:absolute;left:327px;top:0;width:1px;height:17px;background:#f0f0f0"></i><i style="position:absolute;left:447px;top:0;width:1px;height:17px;background:#f0f0f0"></i><i style="position:absolute;left:564px;top:0;width:1px;height:17px;background:#f0f0f0"></i><i style="position:absolute;left:710px;top:0;width:1px;height:17px;background:#f0f0f0"></i><i style="position:absolute;left:910px;top:0;width:1px;height:17px;background:#f0f0f0"></i><i style="position:absolute;left:1147px;top:0;width:1px;height:17px;background:#f0f0f0"></i><i style="position:absolute;left:1274px;top:0;width:1px;height:17px;background:#f0f0f0"></i><i style="position:absolute;left:1444px;top:0;width:1px;height:17px;background:#f0f0f0"></i></div><div class="row" style="top:39px;left:1px;width:1600px;background:#f2dede;border-bottom:1px solid #f0f0f0"><span style="left:7px">21.05.2025</span><span style="left:122px">Hürther Bank (CSV)</span><span style="right:1279px">9,99 €</span><span style="left:329px">Eingang</span><span style="left:450px">Abgeschlossen</span><span style="right:896px">9,99 €</span><span style="left:713px">Max Mustermann</span><span style="left:913px">CSV RE-43061</span><span style="left:1277px">67438B422ECBB61FF182E43F...</span><i style="position:absolute;left:120px;top:0;width:1px;height:17px;background:#f0f0f0"></i><i style="position:absolute;left:247px;top:0;width:1px;height:17px;background:#f0f0f0"></i><i style="position:absolute;left:327px;top:0;width:1px;height:17px;background:#f0f0f0"></i><i style="position:absolute;left:447px;top:0;width:1px;height:17px;background:#f0f0f0"></i><i style="position:absolute;left:564px;top:0;width:1px;height:17px;background:#f0f0f0"></i><i style="position:absolute;left:710px;top:0;width:1px;height:17px;background:#f0f0f0"></i><i style="position:absolute;left:910px;top:0;width:1px;height:17px;background:#f0f0f0"></i><i style="position:absolute;left:1147px;top:0;width:1px;height:17px;background:#f0f0f0"></i><i style="position:absolute;left:1274px;top:0;width:1px;height:17px;background:#f0f0f0"></i><i style="position:absolute;left:1444px;top:0;width:1px;height:17px;background:#f0f0f0"></i></div><div class="row" style="top:56px;left:1px;width:1600px;background:#f2dede;border-bottom:1px solid #f0f0f0"><span style="left:7px">19.05.2025</span><span style="left:122px">Hürther Bank (CSV)</span><span style="right:1279px">43,99 €</span><span style="left:329px">Eingang</span><span style="left:450px">Abgeschlossen</span><span style="right:896px">43,99 €</span><span style="left:713px">Max Mustermann</span><span style="left:913px">CSV RE-15898</span><span style="left:1277px">203670F1DF7D1FB0CA3C3604...</span><i style="position:absolute;left:120px;top:0;width:1px;height:17px;background:#f0f0f0"></i><i style="position:absolute;left:247px;top:0;width:1px;height:17px;background:#f0f0f0"></i><i style="position:absolute;left:327px;top:0;width:1px;height:17px;background:#f0f0f0"></i><i style="position:absolute;left:447px;top:0;width:1px;height:17px;background:#f0f0f0"></i><i style="position:absolute;left:564px;top:0;width:1px;height:17px;background:#f0f0f0"></i><i style="position:absolute;left:710px;top:0;width:1px;height:17px;background:#f0f0f0"></i><i style="position:absolute;left:910px;top:0;width:1px;height:17px;background:#f0f0f0"></i><i style="position:absolute;left:1147px;top:0;width:1px;height:17px;background:#f0f0f0"></i><i style="position:absolute;left:1274px;top:0;width:1px;height:17px;background:#f0f0f0"></i><i style="position:absolute;left:1444px;top:0;width:1px;height:17px;background:#f0f0f0"></i></div><div class="row" style="top:73px;left:1px;width:1600px;background:#f2dede;border-bottom:1px solid #f0f0f0"><span style="left:7px">08.05.2025</span><span style="left:122px">Hürther Bank (CSV)</span><span style="right:1279px">155,99 €</span><span style="left:329px">Eingang</span><span style="left:450px">Abgeschlossen</span><span style="right:896px">155,99 €</span><span style="left:713px">Max Mustermann</span><span style="left:913px">CSV RE-43389</span><span style="left:1277px">5B76F5AA4BAE42629F2EE6B...</span><i style="position:absolute;left:120px;top:0;width:1px;height:17px;background:#f0f0f0"></i><i style="position:absolute;left:247px;top:0;width:1px;height:17px;background:#f0f0f0"></i><i style="position:absolute;left:327px;top:0;width:1px;height:17px;background:#f0f0f0"></i><i style="position:absolute;left:447px;top:0;width:1px;height:17px;background:#f0f0f0"></i><i style="position:absolute;left:564px;top:0;width:1px;height:17px;background:#f0f0f0"></i><i style="position:absolute;left:710px;top:0;width:1px;height:17px;background:#f0f0f0"></i><i style="position:absolute;left:910px;top:0;width:1px;height:17px;background:#f0f0f0"></i><i style="position:absolute;left:1147px;top:0;width:1px;height:17px;background:#f0f0f0"></i><i style="position:absolute;left:1274px;top:0;width:1px;height:17px;background:#f0f0f0"></i><i style="position:absolute;left:1444px;top:0;width:1px;height:17px;background:#f0f0f0"></i></div><div class="row" style="top:90px;left:1px;width:1600px;background:#dff0d8;border-bottom:1px solid #f0f0f0"><span style="left:7px">21.03.2025</span><span style="left:122px">Hürther Bank (CSV)</span><span style="right:1279px">29,99 €</span><span style="left:329px">Eingang</span><span style="left:450px">Abgeschlossen</span><span style="right:896px">0,00 €</span><span style="left:713px">Lilli Berg</span><span style="left:913px">AU202504165</span><span style="left:1277px">F5E5BC846C0A48BD8F90794F...</span><i style="position:absolute;left:120px;top:0;width:1px;height:17px;background:#f0f0f0"></i><i style="position:absolute;left:247px;top:0;width:1px;height:17px;background:#f0f0f0"></i><i style="position:absolute;left:327px;top:0;width:1px;height:17px;background:#f0f0f0"></i><i style="position:absolute;left:447px;top:0;width:1px;height:17px;background:#f0f0f0"></i><i style="position:absolute;left:564px;top:0;width:1px;height:17px;background:#f0f0f0"></i><i style="position:absolute;left:710px;top:0;width:1px;height:17px;background:#f0f0f0"></i><i style="position:absolute;left:910px;top:0;width:1px;height:17px;background:#f0f0f0"></i><i style="position:absolute;left:1147px;top:0;width:1px;height:17px;background:#f0f0f0"></i><i style="position:absolute;left:1274px;top:0;width:1px;height:17px;background:#f0f0f0"></i><i style="position:absolute;left:1444px;top:0;width:1px;height:17px;background:#f0f0f0"></i></div></div><div style="position:absolute;left:238px;top:863px;width:1676px;height:1px;background:#7f8794"></div>
<div class="btn" style="left:238px;width:124px;color:#000;">Manuell zuweisen...</div><div class="btn" style="left:371px;width:145px;color:#000;">Automatisch zuweisen</div><div class="btn" style="left:525px;width:155px;color:#000;">Kontobewegung ausblenden</div><div class="btn" style="left:689px;width:150px;color:#a3a3a3;background:#f6f6f6;border-color:#e2e2e2">Rückbuchung Restbetrag...</div><div class="t" style="left:1823px;top:877px;letter-spacing:0;width:91px;overflow:hidden">5 Einträge geladen</div>
<div style="position:absolute;left:236px;top:924px;width:1680px;height:1px;background:#d9d9d9"></div><div style="position:absolute;left:236px;top:906px;width:179px;height:19px;background:#fafafa;border-right:1px solid #d9d9d9"><span class="t" style="left:5px;top:1px">Zusammenhängende Bewegungen</span></div><div style="position:absolute;left:236px;top:925px;width:1679px;height:188px;background:#fbfbfb"></div><div style="position:absolute;left:240px;top:929px;width:1673px;height:182px;background:#fff;border:1px solid #828790;overflow:hidden"><div class="hd" style="left:0px;width:81px;height:23px"><span style="left:7px;top:5px">Betrag</span></div><div class="hd" style="left:80px;width:121px;height:23px"><span style="left:7px;top:5px">Buchungstyp</span></div><div class="hd" style="left:200px;width:85px;height:23px"><span style="left:7px;top:5px">Status</span></div><div class="hd" style="left:284px;width:163px;height:23px"><span style="left:7px;top:5px">Sender/Empfänger der Zahlung</span></div><div class="hd" style="left:446px;width:194px;height:23px"><span style="left:7px;top:5px">Verwendungszweck/Referenznummer</span></div><div class="hd" style="left:639px;width:105px;height:23px"><span style="left:7px;top:5px;letter-spacing:-0.36px">Interner Kommentar</span></div><div class="hd" style="left:743px;width:928px;height:23px"><span style="left:7px;top:5px">Transaktions-ID (Buchung)</span></div><div class="row" style="top:23px;left:1px;width:1669px;background:#f0f0f0"><i style="position:absolute;left:8px;top:8px;width:10px;height:1px;background:#8484f0"></i><span style="left:20px;top:2px">19,99 €</span><span style="left:83px;top:2px">Eingang</span><span style="left:203px;top:2px">Abgeschlossen</span><span style="left:287px;top:2px">Lilli Berg</span><span style="left:449px;top:2px">AU202504167</span><span style="left:746px;top:2px">28CA042C343150889FF853A88A01A6DAC4141D5199EC2E73E30E44847B17C493</span></div></div>
<div style="position:absolute;left:6px;top:1060px;width:217px;height:23px;background:#fdfdfd;border-bottom:1px solid #c9c9c9"><span class="t" style="left:61px;top:4px">Abgleich starten</span><svg style="position:absolute;left:207px;top:7px" width="5" height="8" viewBox="0 0 5 8"><path d="M0 0 L4.5 4 L0 8 Z" fill="#000"/></svg></div><div style="position:absolute;left:6px;top:1090px;width:217px;height:23px;background:#fdfdfd;border-top:1px solid #d9d9d9"><span class="t" style="left:61px;top:4px">Logbuch einsehen...</span></div>
<div class="frame" style="left:3px;top:98px;width:223px;height:146px"></div><div class="frame" style="left:235px;top:98px;width:1682px;height:53px"></div><div class="frame" style="left:235px;top:156px;width:1682px;height:742px"></div><div class="frame" style="left:3px;top:1057px;width:223px;height:59px"></div><div class="frame" style="left:233px;top:903px;width:1685px;height:213px"></div><div class="circ" style="left:165.0px;top:81.1px"><span style="position:relative;left:1.2px;top:1.5px">A</span></div><div class="circ" style="left:1007.0999999999999px;top:75.8px"><span style="position:relative;left:1.5px;top:1.4px">B</span></div><div class="circ" style="left:766.0px;top:133.9px"><span style="position:relative;left:0.6px;top:1.5px">C</span></div><div class="circ" style="left:12.0px;top:1034.8px"><span style="position:relative;left:1.7px;top:1.35px">D</span></div><div class="circ" style="left:1007.0999999999999px;top:880.9px"><span style="position:relative;left:-0.3px;top:1.5px">E</span></div>
</body></html>
